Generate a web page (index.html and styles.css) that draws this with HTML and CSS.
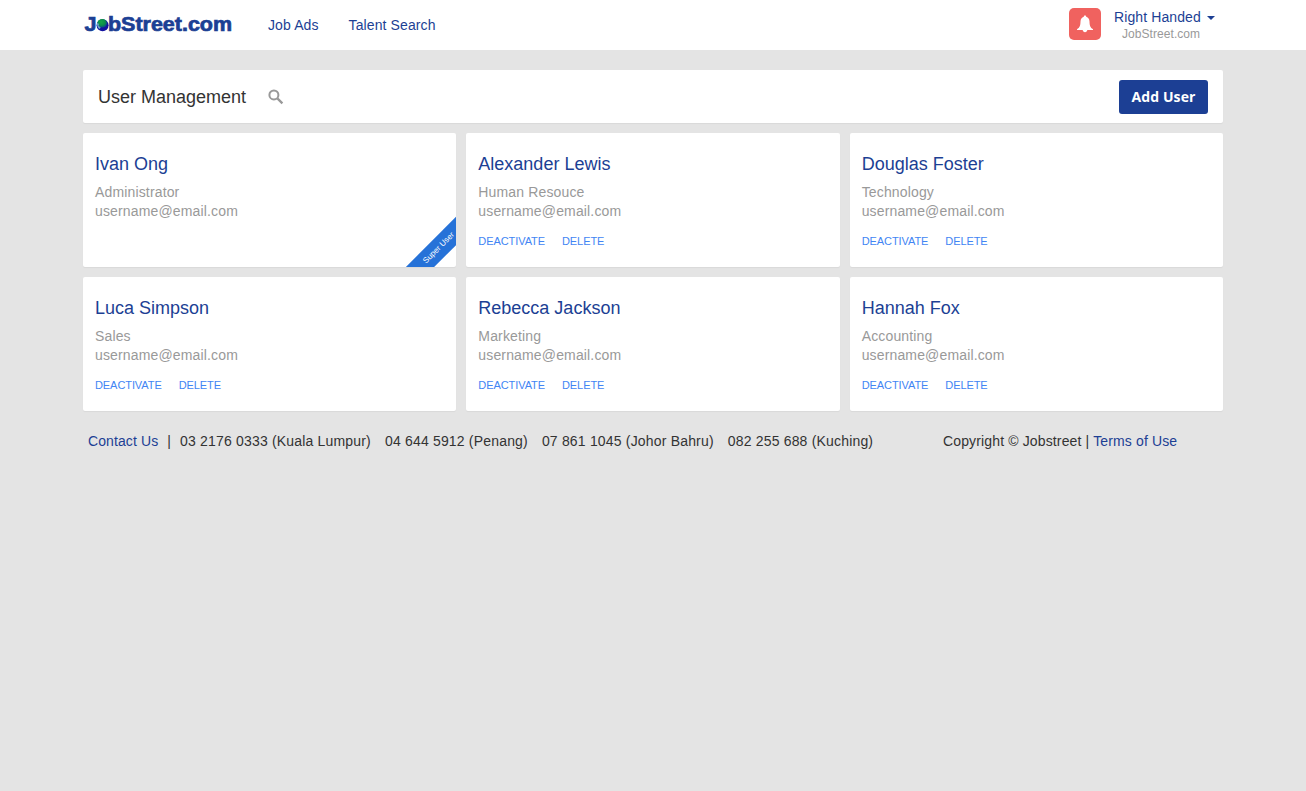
FILE: index.html
```html
<!DOCTYPE html>
<html lang="en">
<head>
<meta charset="utf-8">
<title>User Management - JobStreet.com</title>
<link rel="stylesheet" href="styles.css">
</head>
<body>
<header class="topbar">
  <div class="container topbar-inner">
    <a class="logo" href="#" aria-label="JobStreet.com">
      <svg width="150" height="24" viewBox="0 0 150 24">
        <defs>
          <radialGradient id="land" cx="0.4" cy="0.35" r="0.65">
            <stop offset="0" stop-color="#16a34a"/>
            <stop offset="0.6" stop-color="#0b9048"/>
            <stop offset="1" stop-color="#0b4f86"/>
          </radialGradient>
        </defs>
        <text class="logo-text" x="0.5" y="19.300" textLength="12" lengthAdjust="spacingAndGlyphs">J</text>
        <circle cx="18.6" cy="13.200" r="6" fill="#1212a0"/>
        <ellipse cx="18.200" cy="11.2" rx="4.8" ry="4.2" fill="url(#land)"/>
        <path d="M13 11l2 .8-.4 2 2.200 2-1.400 1.200c-1.600-1.200-2.600-3.200-2.400-6z" fill="#6fa5c4"/>
        <text class="logo-text" x="24" y="19.300" textLength="124" lengthAdjust="spacingAndGlyphs">bStreet.com</text>
      </svg>
    </a>
    <nav class="nav">
      <a href="#">Job Ads</a>
      <a href="#">Talent Search</a>
    </nav>
    <a class="bell" href="#" aria-label="Notifications">
      <svg width="18" height="18" viewBox="0 0 18 18" fill="#fff">
        <path d="M9 .5c-.8 0-1.200.5-1.200 1.300C5.700 2.400 4.600 4 4.500 6.500 4.400 10.500 3.800 12.500 1 14.300v.7h5.700c.2 1.400 1 2.200 2.300 2.200s2.100-.8 2.300-2.200H17v-.7c-2.800-1.800-3.400-3.800-3.500-7.800-.1-2.500-1.200-4.100-3.300-4.700C10.200 1 9.800.5 9 .5z"/>
      </svg>
    </a>
    <div class="account">
      <a class="account-name" href="#">Right Handed<span class="caret"></span></a>
      <div class="account-company">JobStreet.com</div>
    </div>
  </div>
</header>

<main class="container">
  <section class="panel toolbar">
    <h1>User Management</h1>
    <svg class="search" width="16" height="16" viewBox="0 0 16 16" fill="none" stroke="#999">
      <circle cx="5.900" cy="5.900" r="4.500" stroke-width="2"/>
      <path d="M9.400 9.400l5 5" stroke-width="2.300"/>
    </svg>
    <button class="add">Add User</button>
  </section>

  <section class="grid">
    <article class="panel card">
      <h2>Ivan Ong</h2>
      <p>Administrator</p>
      <p>username@email.com</p>
      <span class="ribbon">Super User</span>
    </article>
    <article class="panel card">
      <h2>Alexander Lewis</h2>
      <p>Human Resouce</p>
      <p>username@email.com</p>
      <div class="actions"><a href="#">DEACTIVATE</a><a href="#">DELETE</a></div>
    </article>
    <article class="panel card">
      <h2>Douglas Foster</h2>
      <p>Technology</p>
      <p>username@email.com</p>
      <div class="actions"><a href="#">DEACTIVATE</a><a href="#">DELETE</a></div>
    </article>
    <article class="panel card">
      <h2>Luca Simpson</h2>
      <p>Sales</p>
      <p>username@email.com</p>
      <div class="actions"><a href="#">DEACTIVATE</a><a href="#">DELETE</a></div>
    </article>
    <article class="panel card">
      <h2>Rebecca Jackson</h2>
      <p>Marketing</p>
      <p>username@email.com</p>
      <div class="actions"><a href="#">DEACTIVATE</a><a href="#">DELETE</a></div>
    </article>
    <article class="panel card">
      <h2>Hannah Fox</h2>
      <p>Accounting</p>
      <p>username@email.com</p>
      <div class="actions"><a href="#">DEACTIVATE</a><a href="#">DELETE</a></div>
    </article>
  </section>

  <footer class="footer">
    <div class="contact">
      <a href="#">Contact Us</a>
      <span class="bar">|</span>
      <span class="phone">03 2176 0333 (Kuala Lumpur)</span>
      <span class="phone">04 644 5912 (Penang)</span>
      <span class="phone">07 861 1045 (Johor Bahru)</span>
      <span class="phone">082 255 688 (Kuching)</span>
    </div>
    <div class="copyright">Copyright © Jobstreet | <a href="#">Terms of Use</a></div>
  </footer>
</main>
</body>
</html>
```
FILE: styles.css
```css
* { box-sizing: border-box; }
body {
  margin: 0;
  background: #e4e4e4;
  color: #333;
  font: 14px/19px "Liberation Sans", Arial, sans-serif;
}
a { color: #1c3f94; text-decoration: none; }
h1, h2, p { margin: 0; font-weight: normal; }
.container { width: 1140px; margin: 0 auto; }

.topbar { height: 50px; background: #fff; }
.topbar-inner { display: flex; align-items: flex-start; }
.logo { display: block; width: 150px; height: 24px; margin: 12px 0 0 1px; }
.logo svg { display: block; }
.logo-text {
  font: bold 19.5px "Liberation Sans", Arial, sans-serif;
  fill: #1c3f94;
  stroke: #1c3f94;
  stroke-width: 0.7px;
}
.nav { display: flex; gap: 30px; margin: 16px 0 0 34px; letter-spacing: 0.11px; }
.bell {
  display: flex;
  align-items: center;
  justify-content: center;
  width: 32px;
  height: 32px;
  margin: 8px 13px 0 auto;
  border-radius: 5px;
  background: #f0625f;
}
.account { width: 109px; padding-top: 8px; }
.account-name {
  display: flex;
  align-items: center;
  height: 18px;
  letter-spacing: 0.1px;
  white-space: nowrap;
}
.caret {
  margin: 2px 0 0 6px;
  border: 4px solid transparent;
  border-top-color: #1c3f94;
  border-bottom: 0;
}
.account-company {
  padding-left: 8px;
  color: #999;
  font-size: 12px;
  line-height: 16px;
  letter-spacing: 0.06px;
}

.panel { background: #fff; border-radius: 2px; box-shadow: 0 1px 1px rgba(0, 0, 0, 0.05); }
.toolbar {
  display: flex;
  align-items: center;
  height: 53px;
  margin: 20px 0 10px;
  padding: 0 15px;
}
.toolbar h1 { font-size: 18px; line-height: 24px; }
.search { margin-left: 22px; }
.add {
  width: 89px;
  height: 34px;
  margin-left: auto;
  padding: 0;
  border: 0;
  border-radius: 3px;
  background: #1c3f94;
  color: #fff;
  font: bold 14px "Open Sans", sans-serif;
  letter-spacing: 0.1px;
}

.grid { display: grid; grid-template-columns: repeat(3, 1fr); gap: 10px; }
.card {
  position: relative;
  height: 134px;
  padding: 20px 12px 0;
  overflow: hidden;
  color: #999;
}
.card h2 { margin-bottom: 8px; color: #1c3f94; font-size: 18px; line-height: 22px; }
.card p { letter-spacing: 0.15px; }
.actions { display: flex; gap: 17px; margin-top: 10px; letter-spacing: -0.08px; }
.actions a { color: #4285f4; font-size: 11px; line-height: 20px; }
.ribbon {
  position: absolute;
  right: -33px;
  bottom: 9px;
  width: 100px;
  height: 20px;
  background: #2672d8;
  color: #fff;
  font-size: 8px;
  line-height: 20px;
  text-align: center;
  transform: rotate(-45deg);
}

.footer { display: flex; padding: 21px 0 0 5px; white-space: nowrap; }
.contact { display: flex; width: 855px; letter-spacing: 0.18px; }
.contact a { letter-spacing: 0.1px; }
.bar { margin: 0 9px; }
.phone { margin-right: 14px; }
.copyright { letter-spacing: 0.14px; }
```
